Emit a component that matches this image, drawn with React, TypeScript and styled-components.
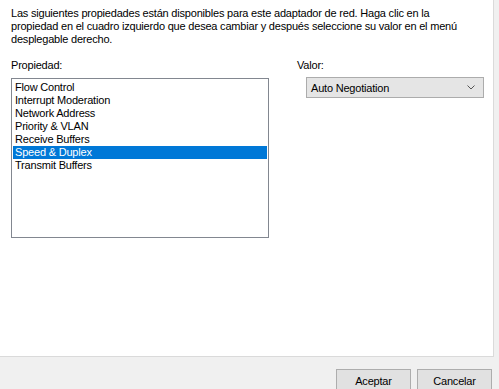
import styled, { createGlobalStyle } from "styled-components";

const Global = createGlobalStyle`
  html, body {
    margin: 0;
    background: #f0f0f0;
    font-family: "Liberation Sans", Arial, sans-serif;
    font-size: 11px;
    letter-spacing: -0.2px;
    color: #000;
  }
`;

const Page = styled.div`
  display: flex;
  flex-direction: column;
  width: 499px;
  height: 389px;
  overflow: hidden;
`;

const Panel = styled.div`
  flex: none;
  width: 494px;
  height: 357px;
  box-sizing: border-box;
  padding: 7px 0 0 11px;
  background: #fff;
  border-right: 1px solid #dadada;
  border-bottom: 1px solid #dadada;
`;

const Intro = styled.p`
  margin: 0;
  width: 462px;
  line-height: 13px;
`;

const Columns = styled.div`
  display: flex;
  margin-top: 13px;
`;

const Column = styled.div<{ $width: number }>`
  display: flex;
  flex-direction: column;
  width: ${(p) => p.$width}px;
`;

const Label = styled.div`
  line-height: 13px;
  height: 13px;
`;

const ListBox = styled.ul`
  margin: 6px 0 0;
  padding: 2px 1px;
  list-style: none;
  height: 160px;
  box-sizing: border-box;
  border: 1px solid #828790;
`;

const Item = styled.li<{ $selected?: boolean }>`
  height: 13px;
  line-height: 13px;
  padding-left: 2px;
  background: ${(p) => (p.$selected ? "#0078d7" : "transparent")};
  color: ${(p) => (p.$selected ? "#fff" : "#000")};
`;

const Combo = styled.div`
  display: flex;
  align-items: center;
  justify-content: space-between;
  margin: 5px 0 0 9px;
  width: 178px;
  height: 21px;
  box-sizing: border-box;
  padding: 0 8px 0 4px;
  background: #e5e5e5;
  border: 1px solid #acacac;
`;

const Footer = styled.div`
  display: flex;
  justify-content: flex-end;
  gap: 6px;
  padding: 12px 7px 0 0;
`;

const Button = styled.button`
  width: 75px;
  height: 23px;
  flex: none;
  font-family: inherit;
  font-size: 11px;
  letter-spacing: inherit;
  color: #000;
  background: #e1e1e1;
  border: 1px solid #adadad;
  padding: 0;
`;

const items = [
  "Flow Control",
  "Interrupt Moderation",
  "Network Address",
  "Priority & VLAN",
  "Receive Buffers",
  "Speed & Duplex",
  "Transmit Buffers",
];

export default function App() {
  return (
    <Page>
      <Global />
      <Panel>
        <Intro>
          Las siguientes propiedades están disponibles para este adaptador de
          red. Haga clic en la propiedad en el cuadro izquierdo que desea
          cambiar y después seleccione su valor en el menú desplegable derecho.
        </Intro>
        <Columns>
          <Column $width={258}>
            <Label>Propiedad:</Label>
            <ListBox>
              {items.map((it) => (
                <Item key={it} $selected={it === "Speed & Duplex"}>
                  {it}
                </Item>
              ))}
            </ListBox>
          </Column>
          <Column $width={28} />
          <Column $width={190}>
            <Label>Valor:</Label>
            <Combo>
              <span>Auto Negotiation</span>
              <svg width="8" height="5" viewBox="0 0 8 5">
                <path d="M0.5 0.5 L4 4 L7.5 0.5" fill="none" stroke="#555" strokeWidth="1" />
              </svg>
            </Combo>
          </Column>
        </Columns>
      </Panel>
      <Footer>
        <Button>Aceptar</Button>
        <Button>Cancelar</Button>
      </Footer>
    </Page>
  );
}
